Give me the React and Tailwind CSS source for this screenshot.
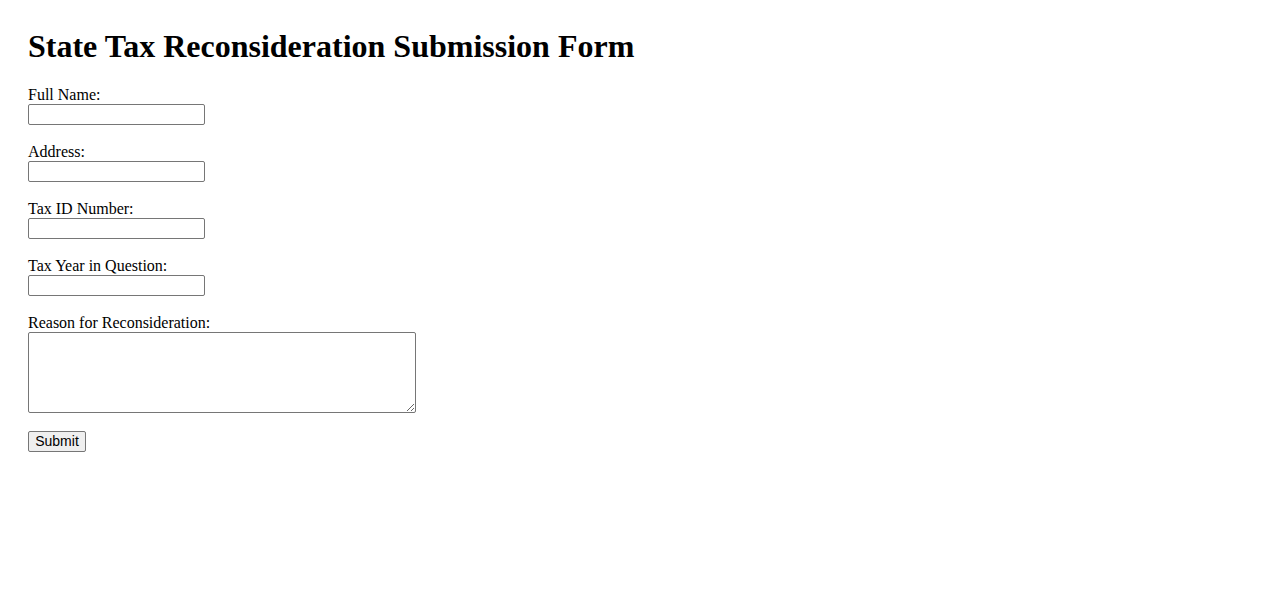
export default function App() {
  const fields = ["Full Name:", "Address:", "Tax ID Number:", "Tax Year in Question:"];
  return (
    <div className="bg-white min-h-[601px] pt-[28px] pl-[28px] text-black" style={{ fontFamily: '"Liberation Serif", "Times New Roman", serif' }}>
      <h1 className="m-0 text-[32px] font-bold leading-[37px]">State Tax Reconsideration Submission Form</h1>
      <form className="mt-[21px]" onSubmit={(e) => e.preventDefault()}>
        {fields.map((f) => (
          <div key={f} className="mb-[18px]">
            <label className="block text-[16px] leading-[18px]">{f}</label>
            <input type="text" className="block w-[177px] h-[21px] border border-[#767676] rounded-[2px] bg-white px-[2px] text-[13.33px]" />
          </div>
        ))}
        <div className="mb-[18px]">
          <label className="block text-[16px] leading-[18px]">Reason for Reconsideration:</label>
          <textarea className="block w-[388px] h-[81px] border border-[#767676] rounded-[2px] bg-white text-[13.33px]" style={{ resize: "both" }} />
        </div>
        <button type="submit" className="flex items-center justify-center w-[58px] h-[21px] border border-[#767676] rounded-[2px] bg-[#efefef] text-[14px] leading-[15px] text-black" style={{ fontFamily: '"Liberation Sans", Arial, sans-serif' }}>Submit</button>
      </form>
    </div>
  );
}
